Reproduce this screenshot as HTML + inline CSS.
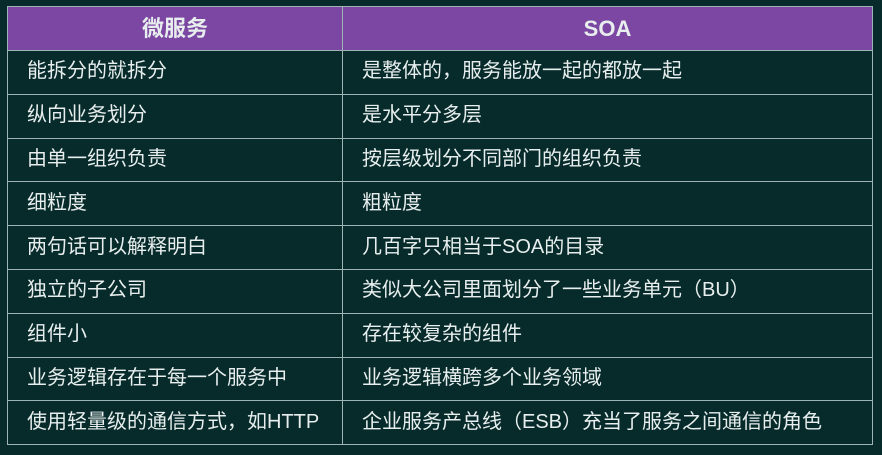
<!DOCTYPE html><html><head><meta charset="utf-8"><style>
body{margin:0;width:882px;height:455px;background:#062b2a;overflow:hidden;font-family:"Liberation Sans","Noto Sans CJK SC",sans-serif}
table{position:absolute;left:7px;top:6px;width:866px;border-collapse:collapse}
td,th{border:1.5px solid #9fb5b5;color:#e8eeee;font-size:20px;height:40.8px;padding:0 0 2px 19px;text-align:left;font-weight:normal;line-height:1}
th{background:#7b47a3;height:43px;font-size:22px;font-weight:bold;text-align:center;padding:0}
td:first-child{width:315px}
</style></head><body><table>
<tr><th>微服务</th><th>SOA</th></tr>
<tr><td>能拆分的就拆分</td><td>是整体的，服务能放一起的都放一起</td></tr>
<tr><td>纵向业务划分</td><td>是水平分多层</td></tr>
<tr><td>由单一组织负责</td><td>按层级划分不同部门的组织负责</td></tr>
<tr><td>细粒度</td><td>粗粒度</td></tr>
<tr><td>两句话可以解释明白</td><td>几百字只相当于SOA的目录</td></tr>
<tr><td>独立的子公司</td><td>类似大公司里面划分了一些业务单元（BU）</td></tr>
<tr><td>组件小</td><td>存在较复杂的组件</td></tr>
<tr><td>业务逻辑存在于每一个服务中</td><td>业务逻辑横跨多个业务领域</td></tr>
<tr><td>使用轻量级的通信方式，如HTTP</td><td>企业服务产总线（ESB）充当了服务之间通信的角色</td></tr>
</table></body></html>
